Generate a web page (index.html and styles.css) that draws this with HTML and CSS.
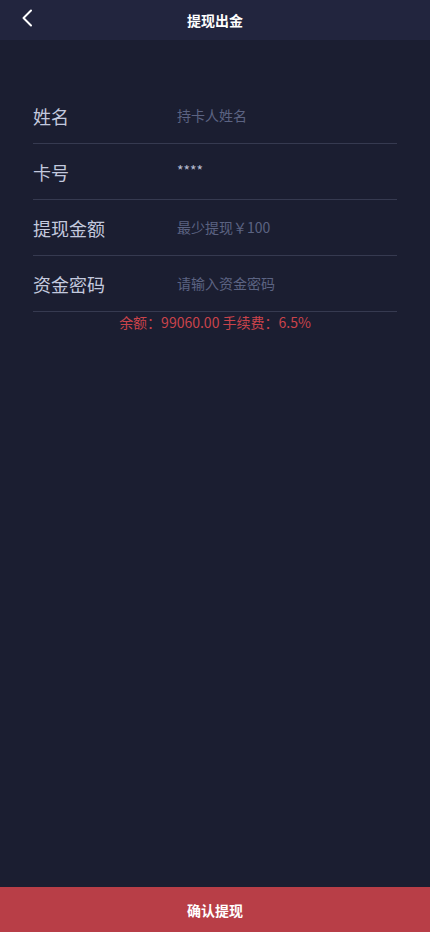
FILE: index.html
```html
<!DOCTYPE html>
<html lang="zh-CN">
<head>
  <meta charset="UTF-8" />
  <meta name="viewport" content="width=device-width, initial-scale=1" />
  <title>提现出金</title>
  <link rel="stylesheet" href="styles.css">
</head>
<body>
  <div class="page">
    <div class="header">
      <a class="back" href="#">
        <svg width="12" height="18" viewBox="0 0 12 18"><path d="M10 1.5 L2.5 9 L10 16.5" fill="none" stroke="#fff" stroke-width="2" stroke-linecap="round" stroke-linejoin="round"/></svg>
      </a>
      <h1>提现出金</h1>
    </div>

    <div class="form">
      <div class="form-row">
        <label>姓名</label>
        <input type="text" placeholder="持卡人姓名" />
      </div>
      <div class="form-row">
        <label>卡号</label>
        <span class="value">****</span>
      </div>
      <div class="form-row">
        <label>提现金额</label>
        <input type="text" placeholder="最少提现￥100" />
      </div>
      <div class="form-row">
        <label>资金密码</label>
        <input type="password" placeholder="请输入资金密码" />
      </div>
      <div class="tip">余额：99060.00 手续费：6.5%</div>
    </div>

    <button class="submit">确认提现</button>
  </div>
</body>
</html>
```

FILE: styles.css
```css
* {
  margin: 0;
  padding: 0;
  box-sizing: border-box;
}

body {
  font-family: "Noto Sans CJK SC", "Liberation Sans", sans-serif;
  background-color: #1b1e31;
  color: #fff;
  height: 100vh;
  overflow: hidden;
}

.page {
  display: flex;
  flex-direction: column;
  height: 100vh;
}

.header {
  height: 40px;
  background-color: #22253e;
  display: flex;
  align-items: center;
  justify-content: center;
  position: relative;
}

.header h1 {
  font-size: 14px;
  font-weight: bold;
  color: #fff;
}

.back {
  position: absolute;
  left: 21px;
  top: 9px;
  display: flex;
}

.form {
  flex: 1;
  padding: 48px 33px 0;
}

.form-row {
  height: 56px;
  display: flex;
  align-items: center;
  border-bottom: 1px solid #363a50;
}

.form-row label {
  width: 144px;
  font-size: 18px;
  color: #c3c9de;
}

.form-row input {
  flex: 1;
  background: transparent;
  border: none;
  outline: none;
  font-family: inherit;
  font-size: 14px;
  color: #c3c9de;
  margin-top: -2px;
}

.form-row input::placeholder {
  color: #5b6382;
}

.form-row .value {
  font-size: 14px;
  color: #b7bdd2;
  margin-top: -3px;
}

.tip {
  text-align: center;
  font-size: 14px;
  color: #c9434b;
}

.submit {
  height: 45px;
  border: none;
  background-color: #b83e47;
  color: #fff;
  font-family: inherit;
  font-size: 14px;
  font-weight: bold;
}
```
